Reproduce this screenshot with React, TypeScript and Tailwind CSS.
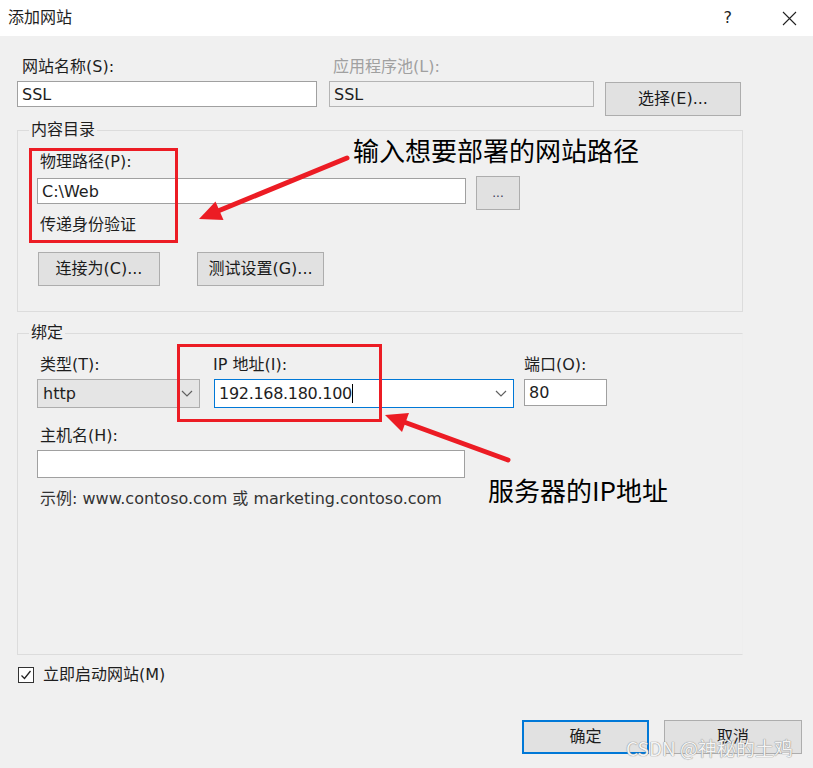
import React from 'react';

const uiFont = '"DejaVu Sans", "Noto Sans CJK SC", sans-serif';
const noteFont = '"Noto Sans CJK SC", "Noto Sans", sans-serif';

function Chevron() {
  return (
    <svg width="12" height="7" viewBox="0 0 12 7" className="shrink-0">
      <polyline points="1,1 6,6 11,1" fill="none" stroke="#606060" strokeWidth="1.2" />
    </svg>
  );
}

function Btn({ children, className = '' }: { children: React.ReactNode; className?: string }) {
  return (
    <button
      className={`h-[34px] bg-[#e1e1e1] border border-[#adadad] text-[16px] text-[#1a1a1a] flex items-center justify-center ${className}`}
    >
      {children}
    </button>
  );
}

export default function App() {
  return (
    <div
      className="relative w-[813px] h-[768px] overflow-hidden bg-[#f0f0f0] text-[16px] leading-[20px] text-[#1e1e1e]"
      style={{ fontFamily: uiFont }}
    >
      {/* Title bar */}
      <div className="h-[36px] bg-white flex items-center justify-between pl-[8px] pr-[16px]">
        <span className="text-[16px]">添加网站</span>
        <div className="flex items-center gap-[50px]">
          <span className="text-[16px] text-[#222]">?</span>
          <svg width="15" height="15" viewBox="0 0 15 15">
            <path d="M1 1 L14 14 M14 1 L1 14" stroke="#222" strokeWidth="1.1" />
          </svg>
        </div>
      </div>

      <div className="pl-[17px]">
        {/* Site name / app pool */}
        <div className="flex mt-[21px]">
          <div className="w-[312px] pl-[5px]">网站名称(S):</div>
          <div className="pl-[4px] text-[#a0a0a0]">应用程序池(L):</div>
        </div>
        <div className="flex items-start mt-[4px]">
          <input
            readOnly
            defaultValue="SSL"
            className="w-[300px] h-[26px] bg-white border border-[#a0a0a0] pl-[4px] outline-none"
          />
          <input
            readOnly
            defaultValue="SSL"
            className="ml-[12px] w-[265px] h-[26px] bg-[#f0f0f0] border border-[#b4b4b4] pl-[4px] outline-none"
          />
          <Btn className="ml-[11px] mt-[1px] w-[136px] h-[33px]">选择(E)...</Btn>
        </div>

        {/* Content directory */}
        <fieldset className="mt-[4px] w-[726px] h-[192px] border border-[#dcdcdc] pl-[19px]">
          <legend className="ml-[-8px] px-[2px] leading-[20px]">内容目录</legend>
          <div className="mt-[12px] pl-[3px]">物理路径(P):</div>
          <div className="flex items-start mt-[4px]">
            <input
              readOnly
              defaultValue="C:\Web"
              className="mt-[2px] w-[429px] h-[26px] bg-white border border-[#a0a0a0] pl-[4px] outline-none"
            />
            <Btn className="ml-[10px] w-[44px]">
              <span className="text-[12px] text-[#3a3a5a] leading-none">...</span>
            </Btn>
          </div>
          <div className="mt-[5px] pl-[3px]">传递身份验证</div>
          <div className="flex mt-[17px] pl-[1px]">
            <Btn className="w-[122px]">连接为(C)...</Btn>
            <Btn className="ml-[37px] w-[127px]">测试设置(G)...</Btn>
          </div>
        </fieldset>

        {/* Binding */}
        <fieldset className="mt-[11px] w-[726px] h-[332px] border border-[#dcdcdc] border-r-[#eeeeee] pl-[19px]">
          <legend className="ml-[-8px] px-[2px] leading-[20px]">绑定</legend>
          <div className="flex mt-[12px]">
            <div className="w-[163px] flex flex-col">
              <div className="pl-[3px]">类型(T):</div>
              <div className="mt-[4px] h-[29px] bg-[#e5e5e5] border border-[#adadad] flex items-center justify-between pl-[5px] pr-[6px]">
                <span>http</span>
                <Chevron />
              </div>
            </div>
            <div className="ml-[14px] w-[300px] flex flex-col">
              <div className="ml-[-1px]">IP 地址(I):</div>
              <div className="mt-[4px] h-[29px] bg-white border border-[#0078d7] flex items-center justify-between pl-[4px] pr-[6px]">
                <span className="flex items-center tracking-[-0.3px]">
                  192.168.180.100
                  <span className="inline-block w-[1px] h-[19px] bg-black" />
                </span>
                <Chevron />
              </div>
            </div>
            <div className="ml-[10px] flex flex-col">
              <div>端口(O):</div>
              <input
                readOnly
                defaultValue="80"
                className="mt-[4px] w-[83px] h-[27px] bg-white border border-[#a0a0a0] pl-[4px] outline-none"
              />
            </div>
          </div>
          <div className="mt-[18px] pl-[3px]">主机名(H):</div>
          <input
            readOnly
            className="mt-[4px] w-[428px] h-[28px] bg-white border border-[#a0a0a0] outline-none"
          />
          <div className="mt-[11px] pl-[3px] text-[#333]">示例: www.contoso.com 或 marketing.contoso.com</div>
        </fieldset>

        {/* Start now */}
        <div className="flex items-center mt-[10px] h-[20px]">
          <div className="ml-[1px] w-[16px] h-[16px] border border-[#333] bg-white flex items-center justify-center">
            <svg width="12" height="12" viewBox="0 0 12 12">
              <polyline points="1.5,6.5 4.5,9.5 10.5,2" fill="none" stroke="#222" strokeWidth="1.3" />
            </svg>
          </div>
          <span className="ml-[9px]">立即启动网站(M)</span>
        </div>
      </div>

      {/* Dialog buttons */}
      <div className="flex justify-end mt-[35px] pr-[11px]">
        <button className="w-[127px] h-[34px] bg-[#e1e1e1] border-2 border-[#0078d7] text-[16px] flex items-center justify-center">
          确定
        </button>
        <Btn className="ml-[15px] w-[138px]">取消</Btn>
      </div>

      {/* Annotations */}
      <div className="absolute left-[29px] top-[148px] w-[149px] h-[95px] border-[3px] border-[#ec1c24]" />
      <div className="absolute left-[177px] top-[344px] w-[205px] h-[78px] border-[3px] border-[#ec1c24]" />
      <div
        className="absolute left-[353px] top-[134px] text-[26px] leading-[32px] text-black"
        style={{ fontFamily: noteFont }}
      >
        输入想要部署的网站路径
      </div>
      <div
        className="absolute left-[488px] top-[474px] text-[26px] leading-[32px] text-black"
        style={{ fontFamily: noteFont }}
      >
        服务器的IP地址
      </div>
      <svg className="absolute left-0 top-0 pointer-events-none" width="813" height="768" viewBox="0 0 813 768">
        <line x1="347" y1="158" x2="218" y2="211" stroke="#ec1c24" strokeWidth="5" strokeLinecap="round" />
        <polygon points="199,219 215.5,201.5 223.5,220" fill="#ec1c24" />
        <line x1="508" y1="460" x2="404" y2="422" stroke="#ec1c24" strokeWidth="5" strokeLinecap="round" />
        <polygon points="385,415 409,413 402,432" fill="#ec1c24" />
      </svg>
      <div
        className="absolute left-[626px] top-[735px] text-[19px] leading-[26px] text-[#f4f4f4]"
        style={{ fontFamily: noteFont, textShadow: '0 0 1px #8a8a8a, 0 0 1px #8a8a8a' }}
      >
        CSDN @神秘的土鸡
      </div>
    </div>
  );
}
